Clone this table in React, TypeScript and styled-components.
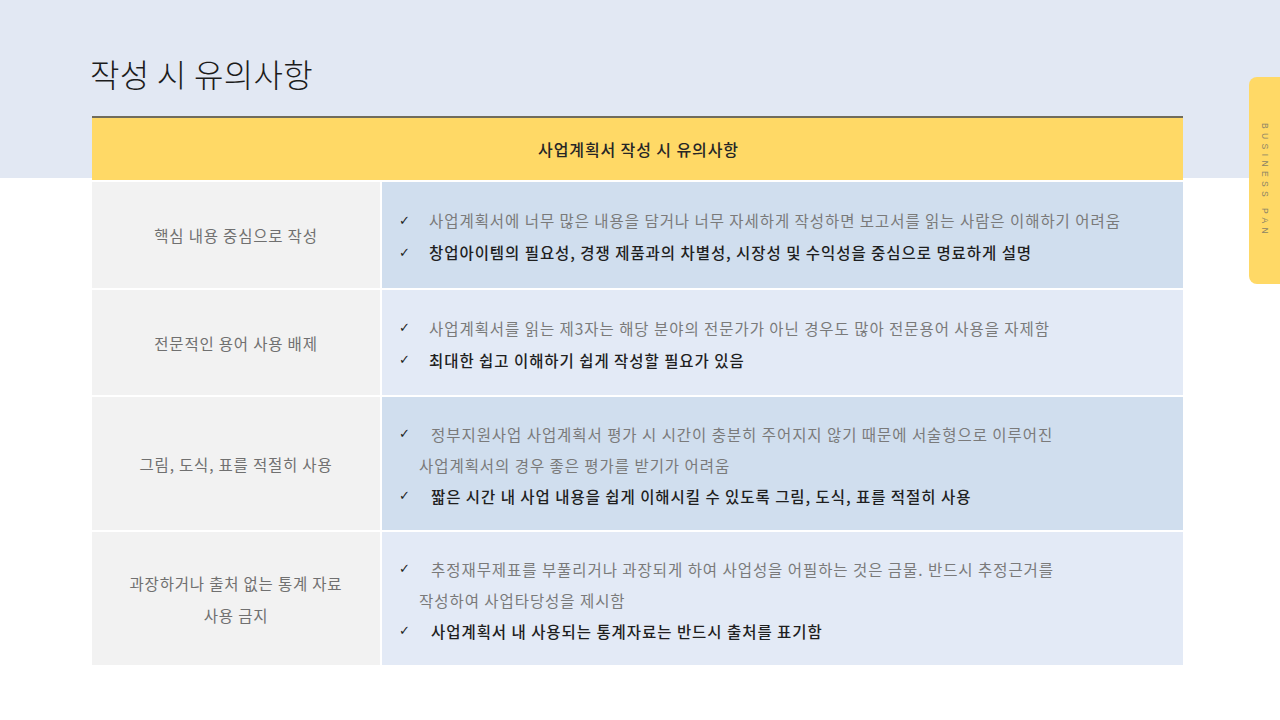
import React from "react";
import styled, { createGlobalStyle } from "styled-components";

const GlobalStyle = createGlobalStyle`
  html, body { margin: 0; padding: 0; }
  body {
    font-family: "Noto Sans CJK KR", "Noto Sans", sans-serif;
    background: #ffffff;
  }
`;

const Page = styled.div`
  position: relative;
  width: 1280px;
  height: 720px;
  overflow: hidden;
  box-sizing: border-box;
  padding: 54px 97px 0 92px;
  background: linear-gradient(to bottom, #e2e8f3 0, #e2e8f3 178px, #ffffff 178px);
`;

const Title = styled.h1`
  margin: 0 0 24px -2px;
  font-size: 32px;
  line-height: 38px;
  font-weight: 300;
  color: #1c1c1c;
  letter-spacing: 0.3px;
`;

const Table = styled.div`
  border-top: 2px solid #706c5c;
  display: flex;
  flex-direction: column;
  gap: 2px;
`;

const Header = styled.div`
  height: 62px;
  background: #ffd966;
  display: flex;
  align-items: center;
  justify-content: center;
  font-size: 16px;
  font-weight: 500;
  color: #262626;
  letter-spacing: 0.9px;
  padding-left: 2px;
`;

const Row = styled.div<{ $h: number }>`
  display: grid;
  grid-template-columns: 288px 1fr;
  column-gap: 2px;
  height: ${(p) => p.$h}px;
`;

const LeftCell = styled.div`
  background: #f2f2f2;
  display: flex;
  flex-direction: column;
  align-items: center;
  justify-content: center;
  text-align: center;
  font-size: 15.5px;
  line-height: 32px;
  color: #707070;
  letter-spacing: 0.8px;
`;

const RightCell = styled.div<{ $tone: "dark" | "light" }>`
  background: ${(p) => (p.$tone === "dark" ? "#d0deee" : "#e3eaf6")};
  display: flex;
  flex-direction: column;
  justify-content: center;
  padding: 2px 0 0 17px;
`;

const Line = styled.div<{ $strong?: boolean; $cont?: boolean; $lh: number }>`
  display: flex;
  align-items: center;
  height: ${(p) => p.$lh}px;
  font-size: 15.5px;
  letter-spacing: ${(p) => (p.$strong ? "0.95px" : "0.95px")};
  white-space: nowrap;
  color: ${(p) => (p.$strong ? "#1f1f1f" : "#7a7a7a")};
  font-weight: ${(p) => (p.$strong ? 500 : 400)};
  padding-left: ${(p) => (p.$cont ? "20px" : "0")};
`;

const Check = styled.span<{ $pad?: boolean }>`
  font-family: "DejaVu Sans", sans-serif;
  font-size: 13px;
  color: #1f1f1f;
  font-weight: 400;
  width: ${(p) => (p.$pad ? "32px" : "30px")};
  flex: none;
  letter-spacing: 0;
`;

const SideTab = styled.div`
  position: absolute;
  right: 0;
  top: 77px;
  width: 31px;
  height: 207px;
  background: #ffd966;
  border-radius: 8px 0 0 8px;
  display: flex;
  align-items: flex-start;
  justify-content: center;
  padding-top: 46px;
  box-sizing: border-box;
`;

const SideText = styled.span`
  writing-mode: vertical-rl;
  font-family: "Liberation Sans", Arial, sans-serif;
  font-size: 8.5px;
  letter-spacing: 4.4px;
  color: #8c8466;
`;

type Item = { text: string; strong?: boolean; cont?: boolean; pad?: boolean };
type RowData = {
  label: string[];
  h: number;
  lh: number;
  tone: "dark" | "light";
  items: Item[];
};

const rows: RowData[] = [
  {
    label: ["핵심 내용 중심으로 작성"],
    h: 106,
    lh: 32,
    tone: "dark",
    items: [
      { text: "사업계획서에 너무 많은 내용을 담거나 너무 자세하게 작성하면 보고서를 읽는 사람은 이해하기 어려움" },
      { text: "창업아이템의 필요성, 경쟁 제품과의 차별성, 시장성 및 수익성을 중심으로 명료하게 설명", strong: true },
    ],
  },
  {
    label: ["전문적인 용어 사용 배제"],
    h: 105,
    lh: 32,
    tone: "light",
    items: [
      { text: "사업계획서를 읽는 제3자는 해당 분야의 전문가가 아닌 경우도 많아 전문용어 사용을 자제함" },
      { text: "최대한 쉽고 이해하기 쉽게 작성할 필요가 있음", strong: true },
    ],
  },
  {
    label: ["그림, 도식, 표를 적절히 사용"],
    h: 133,
    lh: 31,
    tone: "dark",
    items: [
      { text: "정부지원사업 사업계획서 평가 시 시간이 충분히 주어지지 않기 때문에 서술형으로 이루어진", pad: true },
      { text: "사업계획서의 경우 좋은 평가를 받기가 어려움", cont: true },
      { text: "짧은 시간 내 사업 내용을 쉽게 이해시킬 수 있도록 그림, 도식, 표를 적절히 사용", strong: true, pad: true },
    ],
  },
  {
    label: ["과장하거나 출처 없는 통계 자료", "사용 금지"],
    h: 133,
    lh: 31,
    tone: "light",
    items: [
      { text: "추정재무제표를 부풀리거나 과장되게 하여 사업성을 어필하는 것은 금물. 반드시 추정근거를", pad: true },
      { text: "작성하여 사업타당성을 제시함", cont: true },
      { text: "사업계획서 내 사용되는 통계자료는 반드시 출처를 표기함", strong: true, pad: true },
    ],
  },
];

export default function App() {
  return (
    <>
      <GlobalStyle />
      <Page>
        <Title>작성 시 유의사항</Title>
        <Table>
          <Header>사업계획서 작성 시 유의사항</Header>
          {rows.map((r, i) => (
            <Row key={i} $h={r.h}>
              <LeftCell>
                {r.label.map((l, j) => (
                  <div key={j}>{l}</div>
                ))}
              </LeftCell>
              <RightCell $tone={r.tone}>
                {r.items.map((it, j) => (
                  <Line key={j} $strong={it.strong} $cont={it.cont} $lh={r.lh}>
                    {!it.cont && <Check $pad={it.pad}>✓</Check>}
                    <span>{it.text}</span>
                  </Line>
                ))}
              </RightCell>
            </Row>
          ))}
        </Table>
        <SideTab>
          <SideText>BUSINESS PAN</SideText>
        </SideTab>
      </Page>
    </>
  );
}
